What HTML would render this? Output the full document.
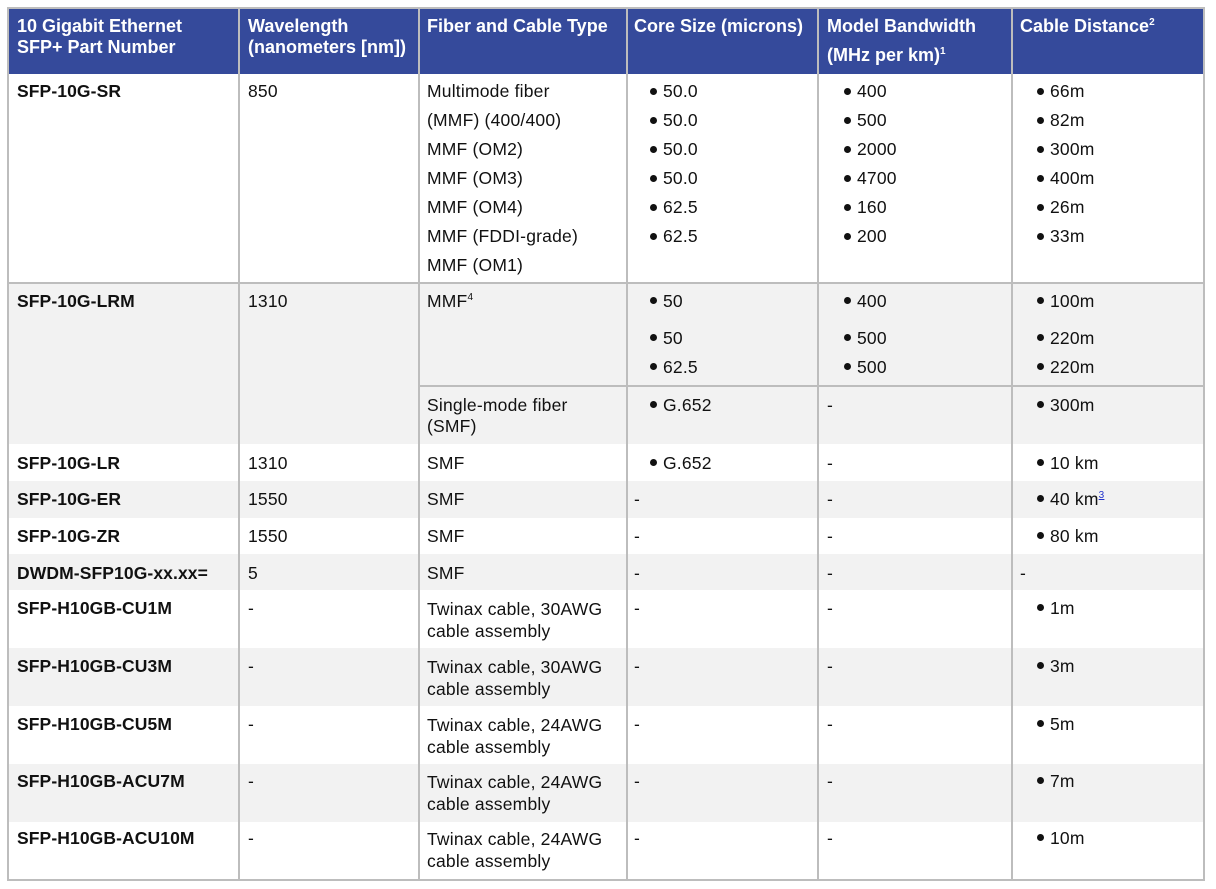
<!DOCTYPE html><html><head><meta charset="utf-8"><style>
body{margin:0;width:1216px;height:889px;background:#fff;position:relative;font-family:"Liberation Sans",Arial,sans-serif;font-size:17.5px;letter-spacing:0.2px;color:#111;overflow:hidden}
div{position:absolute}
.t{line-height:20px;white-space:nowrap}
.h{color:#fff;font-weight:bold;font-size:18px;line-height:21px;letter-spacing:0}
.b{font-weight:bold;letter-spacing:0.1px}
.bu::before{content:"";position:absolute;left:-13px;top:6px;width:7px;height:7px;border-radius:50%;background:#111}
.s .bu::before{top:11px}
.v{width:2px;background:#bdbdbd;top:8px;height:872px}
.g{background:#f2f2f2}
sup{font-size:10px;line-height:0}
</style></head><body>
<div style="left:8px;top:8px;width:1196px;height:66px;background:#354a9b"></div>
<div class="g" style="left:8px;top:284px;width:1196px;height:160px"></div>
<div class="g" style="left:8px;top:481px;width:1196px;height:37px"></div>
<div class="g" style="left:8px;top:554px;width:1196px;height:36px"></div>
<div class="g" style="left:8px;top:648px;width:1196px;height:58px"></div>
<div class="g" style="left:8px;top:764px;width:1196px;height:58px"></div>
<div style="left:7px;top:7px;width:1198px;border:2px solid #bdbdbd;box-sizing:border-box;height:874px"></div>
<div class="v" style="left:238px"></div><div class="v" style="left:418px"></div><div class="v" style="left:626px"></div><div class="v" style="left:817px"></div><div class="v" style="left:1011px"></div>
<div style="left:8px;top:282px;width:1196px;height:2px;background:#bdbdbd"></div>
<div style="left:419px;top:385px;width:785px;height:2px;background:#bdbdbd"></div>

<div class="h" style="left:17px;top:16px">10 Gigabit Ethernet<br>SFP+ Part Number</div>
<div class="h" style="left:248px;top:16px">Wavelength<br>(nanometers [nm])</div>
<div class="h" style="left:427px;top:16px">Fiber and Cable Type</div>
<div class="h" style="left:634px;top:16px">Core Size (microns)</div>
<div class="h" style="left:827px;top:12px;line-height:29px">Model Bandwidth<br>(MHz per km)<sup>1</sup></div>
<div class="h" style="left:1020px;top:16px">Cable Distance<sup>2</sup></div>

<div class="t b" style="left:17px;top:81px">SFP-10G-SR</div>
<div class="t" style="left:248px;top:81px">850</div>
<div class="t" style="left:427px;top:77px;line-height:29px">Multimode fiber<br>(MMF) (400/400)<br>MMF (OM2)<br>MMF (OM3)<br>MMF (OM4)<br>MMF (FDDI-grade)<br>MMF (OM1)</div>
<div class="t s" style="left:663px;top:77px;line-height:29px"><div class="bu" style="position:relative">50.0</div><div class="bu" style="position:relative">50.0</div><div class="bu" style="position:relative">50.0</div><div class="bu" style="position:relative">50.0</div><div class="bu" style="position:relative">62.5</div><div class="bu" style="position:relative">62.5</div></div>
<div class="t s" style="left:857px;top:77px;line-height:29px"><div class="bu" style="position:relative">400</div><div class="bu" style="position:relative">500</div><div class="bu" style="position:relative">2000</div><div class="bu" style="position:relative">4700</div><div class="bu" style="position:relative">160</div><div class="bu" style="position:relative">200</div></div>
<div class="t s" style="left:1050px;top:77px;line-height:29px"><div class="bu" style="position:relative">66m</div><div class="bu" style="position:relative">82m</div><div class="bu" style="position:relative">300m</div><div class="bu" style="position:relative">400m</div><div class="bu" style="position:relative">26m</div><div class="bu" style="position:relative">33m</div></div>

<div class="t b" style="left:17px;top:291px">SFP-10G-LRM</div>
<div class="t" style="left:248px;top:291px">1310</div>
<div class="t" style="left:427px;top:291px">MMF<sup>4</sup></div>
<div class="t bu" style="left:663px;top:291px">50</div><div class="t bu" style="left:663px;top:328px">50</div><div class="t bu" style="left:663px;top:357px">62.5</div>
<div class="t bu" style="left:857px;top:291px">400</div><div class="t bu" style="left:857px;top:328px">500</div><div class="t bu" style="left:857px;top:357px">500</div>
<div class="t bu" style="left:1050px;top:291px">100m</div><div class="t bu" style="left:1050px;top:328px">220m</div><div class="t bu" style="left:1050px;top:357px">220m</div>
<div class="t" style="left:427px;top:395px;line-height:21px">Single-mode fiber<br>(SMF)</div>
<div class="t bu" style="left:663px;top:395px">G.652</div><div class="t" style="left:827px;top:395px">-</div><div class="t bu" style="left:1050px;top:395px">300m</div>

<div class="t b" style="left:17px;top:453px">SFP-10G-LR</div><div class="t" style="left:248px;top:453px">1310</div><div class="t" style="left:427px;top:453px">SMF</div><div class="t bu" style="left:663px;top:453px">G.652</div><div class="t" style="left:827px;top:453px">-</div><div class="t bu" style="left:1050px;top:453px">10 km</div>
<div class="t b" style="left:17px;top:489px">SFP-10G-ER</div><div class="t" style="left:248px;top:489px">1550</div><div class="t" style="left:427px;top:489px">SMF</div><div class="t" style="left:634px;top:489px">-</div><div class="t" style="left:827px;top:489px">-</div><div class="t bu" style="left:1050px;top:489px">40 km<sup style="color:#2233cc;text-decoration:underline">3</sup></div>
<div class="t b" style="left:17px;top:526px">SFP-10G-ZR</div><div class="t" style="left:248px;top:526px">1550</div><div class="t" style="left:427px;top:526px">SMF</div><div class="t" style="left:634px;top:526px">-</div><div class="t" style="left:827px;top:526px">-</div><div class="t bu" style="left:1050px;top:526px">80 km</div>
<div class="t b" style="left:17px;top:563px">DWDM-SFP10G-xx.xx=</div><div class="t" style="left:248px;top:563px">5</div><div class="t" style="left:427px;top:563px">SMF</div><div class="t" style="left:634px;top:563px">-</div><div class="t" style="left:827px;top:563px">-</div><div class="t" style="left:1020px;top:563px">-</div>

<div class="t b" style="left:17px;top:598px">SFP-H10GB-CU1M</div><div class="t" style="left:248px;top:598px">-</div><div class="t" style="left:427px;top:598px;line-height:22px">Twinax cable, 30AWG<br>cable assembly</div><div class="t" style="left:634px;top:598px">-</div><div class="t" style="left:827px;top:598px">-</div><div class="t bu" style="left:1050px;top:598px">1m</div>
<div class="t b" style="left:17px;top:656px">SFP-H10GB-CU3M</div><div class="t" style="left:248px;top:656px">-</div><div class="t" style="left:427px;top:656px;line-height:22px">Twinax cable, 30AWG<br>cable assembly</div><div class="t" style="left:634px;top:656px">-</div><div class="t" style="left:827px;top:656px">-</div><div class="t bu" style="left:1050px;top:656px">3m</div>
<div class="t b" style="left:17px;top:714px">SFP-H10GB-CU5M</div><div class="t" style="left:248px;top:714px">-</div><div class="t" style="left:427px;top:714px;line-height:22px">Twinax cable, 24AWG<br>cable assembly</div><div class="t" style="left:634px;top:714px">-</div><div class="t" style="left:827px;top:714px">-</div><div class="t bu" style="left:1050px;top:714px">5m</div>
<div class="t b" style="left:17px;top:771px">SFP-H10GB-ACU7M</div><div class="t" style="left:248px;top:771px">-</div><div class="t" style="left:427px;top:771px;line-height:22px">Twinax cable, 24AWG<br>cable assembly</div><div class="t" style="left:634px;top:771px">-</div><div class="t" style="left:827px;top:771px">-</div><div class="t bu" style="left:1050px;top:771px">7m</div>
<div class="t b" style="left:17px;top:828px">SFP-H10GB-ACU10M</div><div class="t" style="left:248px;top:828px">-</div><div class="t" style="left:427px;top:828px;line-height:22px">Twinax cable, 24AWG<br>cable assembly</div><div class="t" style="left:634px;top:828px">-</div><div class="t" style="left:827px;top:828px">-</div><div class="t bu" style="left:1050px;top:828px">10m</div>
</body></html>
